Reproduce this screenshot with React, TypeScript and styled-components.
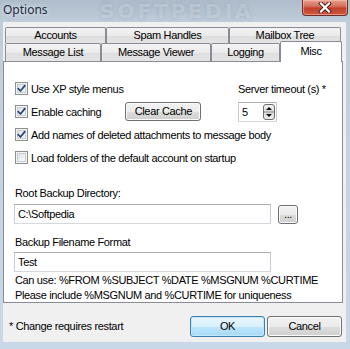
import React from 'react';
import styled, { createGlobalStyle } from 'styled-components';

const Global = createGlobalStyle`
  html, body { margin: 0; padding: 0; }
  body {
    width: 350px; height: 349px; overflow: hidden;
    font-family: "Liberation Sans", Arial, sans-serif;
    font-size: 11px; color: #000;
  }
`;

const Window = styled.div`
  width: 350px; height: 349px; box-sizing: border-box;
  background: linear-gradient(to bottom, #aebccb 0px, #bfccda 22px, #c6d5e5 60%, #c9d8e8 100%);
  display: flex; flex-direction: column;
  position: relative; overflow: hidden;
`;

const TitleBar = styled.div`
  height: 22px; flex: none;
  display: flex; align-items: flex-start; justify-content: space-between;
  position: relative;
`;

const Title = styled.span`
  font-family: "Noto Sans", "Open Sans", sans-serif;
  font-size: 12px; line-height: 15px; color: #1c2b40;
  margin: 2px 0 0 3px;
  text-shadow: 0 0 5px rgba(255,255,255,0.9);
  position: relative; z-index: 1;
`;

const Watermark = styled.span`
  position: absolute; top: 1px; left: 100px;
  font-family: "DejaVu Sans", sans-serif; font-weight: bold;
  font-size: 20px; letter-spacing: 3px; line-height: 20px;
  color: rgba(255,255,255,0.22);
  text-shadow: 0 0 4px rgba(90,110,135,0.25);
  pointer-events: none; white-space: nowrap;
`;

const CloseButton = styled.div`
  width: 46px; height: 16px; box-sizing: border-box;
  margin: 0 2px 0 0;
  border: 1px solid #6b3029; border-top: none; border-radius: 0 0 4px 4px;
  background: linear-gradient(to bottom, #e6a190 0%, #d6735f 40%, #c1402b 55%, #cf5a3f 100%);
  box-shadow: inset 0 0 0 1px rgba(255,200,190,0.5);
  display: flex; align-items: center; justify-content: center;
`;

const Client = styled.div`
  margin: 0 4px 0 3px;
  height: 320px; flex: none;
  background: #f0f0f0;
  display: flex; flex-direction: column;
`;

const TabStrip = styled.div`
  padding-top: 5px;
  display: flex; flex-direction: column;
`;

const TabRow = styled.div<{ $h: number }>`
  display: flex; align-items: flex-start;
  height: ${p => p.$h}px; padding-left: 2px;
`;

const Tab = styled.div<{ $w: number; $h: number; $active?: boolean }>`
  width: ${p => p.$w}px; height: ${p => p.$h}px; box-sizing: border-box;
  flex: none;
  border: 1px solid #898c95; border-bottom: none;
  border-radius: 2px 2px 0 0;
  background: ${p => p.$active ? '#fff' : 'linear-gradient(to bottom, #f3f3f3 0%, #ebebeb 50%, #dedede 51%, #e4e4e4 100%)'};
  display: flex; align-items: ${p => p.$active ? 'flex-start' : 'center'}; justify-content: center;
  padding-top: ${p => p.$active ? 3 : 0}px;
  letter-spacing: -0.35px; line-height: 13px;
  margin-top: ${p => p.$active ? -2 : 0}px;
  position: relative; z-index: ${p => p.$active ? 2 : 0};
`;

const Panel = styled.div`
  width: 340px; height: 242px; box-sizing: border-box;
  border: 1px solid #898c95; background: #fff;
  padding: 15px 0 0 11px;
  display: flex; flex-direction: column;
`;

const OptionsGrid = styled.div`
  display: grid;
  grid-template-columns: 223px 1fr;
  grid-auto-rows: 23px;
  align-items: center;
`;

const Row = styled.div<{ $span?: boolean }>`
  display: flex; align-items: center;
  grid-column: ${p => p.$span ? '1 / span 2' : 'auto'};
`;

const Box = styled.span`
  width: 13px; height: 13px; box-sizing: border-box; flex: none;
  border: 1px solid #8e8f8f;
  background: linear-gradient(135deg, #d6d8db 0%, #eceef0 50%, #fafafa 100%);
  box-shadow: inset 0 0 0 1px #f4f4f4, inset 0 0 0 2px #c9ccd1;
  display: flex; align-items: center; justify-content: center;
`;

const Label = styled.span`
  letter-spacing: -0.35px; line-height: 14px; white-space: nowrap;
`;

const CheckLabel = styled(Label)`
  margin-left: 3px;
`;

const Button = styled.div<{ $w: number; $h: number; $default?: boolean }>`
  width: ${p => p.$w}px; height: ${p => p.$h}px; box-sizing: border-box; flex: none;
  border: 1px solid ${p => p.$default ? '#3c7fb1' : '#707070'};
  border-radius: 3px;
  background: ${p => p.$default
    ? 'linear-gradient(to bottom, #eaf6fd 0%, #d9f0fc 50%, #bee6fd 51%, #a7d9f5 100%)'
    : 'linear-gradient(to bottom, #f2f2f2 0%, #ebebeb 50%, #dddddd 51%, #cfcfcf 100%)'};
  box-shadow: inset 0 0 0 1px ${p => p.$default ? '#bfe8fb' : '#fbfbfb'};
  display: flex; align-items: center; justify-content: center;
  letter-spacing: -0.35px; line-height: 13px;
`;

const ClearCache = styled(Button)`
  margin-left: 24px;
`;

const Spinner = styled.div`
  width: 39px; height: 20px; box-sizing: border-box;
  border: 1px solid #abadb3; border-color: #abadb3 #c9ccd2 #d5d8dd #c9ccd2;
  background: #fff;
  display: flex; align-items: center; justify-content: space-between;
  padding: 0 1px 0 3px;
`;

const Section = styled.div<{ $mt: number }>`
  margin-top: ${p => p.$mt}px;
  display: flex; flex-direction: column; align-items: flex-start;
`;

const InputRow = styled.div`
  display: flex; align-items: center; margin-top: 3px;
  margin-left: -1px;
`;

const TextInput = styled.div<{ $h: number }>`
  width: 257px; height: ${p => p.$h}px; box-sizing: border-box;
  border: 1px solid #abadb3; border-color: #abadb3 #c9ccd2 #d5d8dd #c9ccd2;
  background: #fff;
  display: flex; align-items: center; padding-left: 3px;
  letter-spacing: -0.35px;
`;

const BrowseButton = styled(Button)`
  margin-left: 7px; margin-top: 2px;
`;

const HelpLine = styled(Label)`
  line-height: 15px;
`;

const HelpBlock = styled.div`
  margin-top: 1px; display: flex; flex-direction: column;
`;

const Footer = styled.div`
  flex: 1; display: flex; align-items: flex-start;
  padding: 13px 4px 0 6px;
`;

const FooterNote = styled(Label)`
  margin-top: 3px; flex: 1;
`;

const ButtonGroup = styled.div`
  display: flex; gap: 2px;
`;

const Check = () => (
  <svg width="9" height="9" viewBox="0 0 9 9">
    <path d="M1.2 4.6 L3.5 7 L7.8 1.6" fill="none" stroke="#27457e" strokeWidth="1.7" strokeLinejoin="round" strokeLinecap="round" />
  </svg>
);

const CheckBox = ({ checked, label }: { checked: boolean; label: string }) => (
  <>
    <Box>{checked && <Check />}</Box>
    <CheckLabel>{label}</CheckLabel>
  </>
);

const SpinIcon = () => (
  <svg width="12" height="16" viewBox="0 0 12 16">
    <defs>
      <linearGradient id="sg" x1="0" y1="0" x2="0" y2="1">
        <stop offset="0" stopColor="#f4f4f4" />
        <stop offset="0.5" stopColor="#dcdcdc" />
        <stop offset="1" stopColor="#f0f0f0" />
      </linearGradient>
    </defs>
    <rect x="0.5" y="0.5" width="11" height="15" rx="2.5" fill="url(#sg)" stroke="#6e6e6e" />
    <line x1="1" y1="8" x2="11" y2="8" stroke="#8a8a8a" />
    <path d="M3 6 L6 3 L9 6 Z" fill="#111" />
    <path d="M3 10 L6 13 L9 10 Z" fill="#111" />
  </svg>
);

const CloseX = () => (
  <svg width="14" height="11" viewBox="0 0 14 11">
    <path d="M3 1.5 L11 9.5 M11 1.5 L3 9.5" stroke="#4a1e18" strokeWidth="4" strokeLinecap="square" />
    <path d="M3 1.5 L11 9.5 M11 1.5 L3 9.5" stroke="#fff" strokeWidth="2.2" strokeLinecap="square" />
  </svg>
);

export default function App() {
  return (
    <>
      <Global />
      <Window>
        <TitleBar>
          <Title>Options</Title>
          <Watermark>SOFTPEDIA</Watermark>
          <CloseButton><CloseX /></CloseButton>
        </TitleBar>
        <Client>
          <TabStrip>
            <TabRow $h={16}>
              <Tab $w={101} $h={16}>Accounts</Tab>
              <Tab $w={123} $h={16}>Spam Handles</Tab>
              <Tab $w={112} $h={16}>Mailbox Tree</Tab>
            </TabRow>
            <TabRow $h={18}>
              <Tab $w={96} $h={18}>Message List</Tab>
              <Tab $w={110} $h={18}>Message Viewer</Tab>
              <Tab $w={69} $h={18}>Logging</Tab>
              <Tab $w={62} $h={21} $active>Misc</Tab>
            </TabRow>
          </TabStrip>
          <Panel>
            <OptionsGrid>
              <Row><CheckBox checked label="Use XP style menus" /></Row>
              <Row><Label>Server timeout (s) *</Label></Row>
              <Row>
                <CheckBox checked label="Enable caching" />
                <ClearCache $w={76} $h={19}>Clear Cache</ClearCache>
              </Row>
              <Row>
                <Spinner><Label>5</Label><SpinIcon /></Spinner>
              </Row>
              <Row $span><CheckBox checked label="Add names of deleted attachments to message body" /></Row>
              <Row $span><CheckBox checked={false} label="Load folders of the default account on startup" /></Row>
            </OptionsGrid>
            <Section $mt={17}>
              <Label>Root Backup Directory:</Label>
              <InputRow>
                <TextInput $h={20}>C:\Softpedia</TextInput>
                <BrowseButton $w={20} $h={19}>...</BrowseButton>
              </InputRow>
            </Section>
            <Section $mt={11}>
              <Label>Backup Filename Format</Label>
              <InputRow>
                <TextInput $h={20}>Test</TextInput>
              </InputRow>
              <HelpBlock>
                <HelpLine>Can use: %FROM %SUBJECT %DATE %MSGNUM %CURTIME</HelpLine>
                <HelpLine>Please include %MSGNUM and %CURTIME for uniqueness</HelpLine>
              </HelpBlock>
            </Section>
          </Panel>
          <Footer>
            <FooterNote>* Change requires restart</FooterNote>
            <ButtonGroup>
              <Button $w={75} $h={21} $default>OK</Button>
              <Button $w={75} $h={21}>Cancel</Button>
            </ButtonGroup>
          </Footer>
        </Client>
      </Window>
    </>
  );
}
